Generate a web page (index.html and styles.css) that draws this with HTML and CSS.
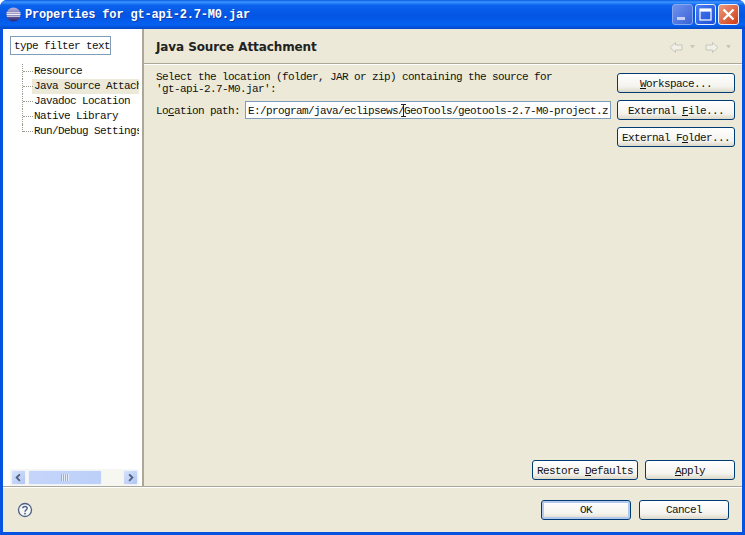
FILE: index.html
```html
<!DOCTYPE html>
<html>
<head>
<meta charset="utf-8">
<title>Properties</title>
<link rel="stylesheet" href="styles.css">
</head>
<body>
<div class="window">
  <header class="titlebar">
    <svg class="appicon" width="15" height="15" viewBox="0 0 15 15"><defs><linearGradient id="sph" x1="0" y1="0" x2="0" y2="1"><stop offset="0" stop-color="#b9b4e0"/><stop offset="1" stop-color="#2c2470"/></linearGradient></defs><circle cx="7.5" cy="7.5" r="7" fill="url(#sph)"/><path d="M0.5 5.8h14M0.5 7.5h14M0.8 9.2h13.4" stroke="#fff" stroke-width="0.9"/></svg>
    <span class="titletext">Properties for gt-api-2.7-M0.jar</span>
    <div class="wincontrols">
      <span class="wbtn wmin"><svg width="21" height="21" viewBox="0 0 21 21"><rect x="5" y="13" width="8" height="3" fill="#c5d0f2"/></svg></span>
      <span class="wbtn wmax"><svg width="21" height="21" viewBox="0 0 21 21"><rect x="5" y="5" width="11" height="11" fill="none" stroke="#fff" stroke-width="1.2"/><rect x="5" y="5" width="11" height="2.6" fill="#fff"/></svg></span>
      <span class="wbtn wclose"><svg width="21" height="21" viewBox="0 0 21 21"><path d="M5.5 5.5l10 10M15.5 5.5l-10 10" stroke="#fff" stroke-width="2.4"/></svg></span>
    </div>
  </header>
  <div class="client">
    <div class="panes">
      <aside class="sidebar">
        <div class="filter">type filter text</div>
        <ul class="tree">
          <li class="node"><span class="label">Resource</span></li>
          <li class="node selected"><span class="label">Java Source Attachment</span></li>
          <li class="node"><span class="label">Javadoc Location</span></li>
          <li class="node"><span class="label">Native Library</span></li>
          <li class="node last"><span class="label">Run/Debug Settings</span></li>
        </ul>
        <div class="hscroll">
          <span class="sbtn"><svg width="14" height="14" viewBox="0 0 14 14"><path d="M8.500 3L5 6.500l3.500 3.500" fill="none" stroke="#4d6185" stroke-width="2"/></svg></span>
          <span class="thumb"><span class="grip"></span></span>
          <span class="strack"></span>
          <span class="sbtn"><svg width="14" height="14" viewBox="0 0 14 14"><path d="M5.500 3L9 6.500l-3.500 3.500" fill="none" stroke="#4d6185" stroke-width="2"/></svg></span>
        </div>
      </aside>
      <main class="page">
        <div class="pagehead">
          <h1 class="pagetitle">Java Source Attachment</h1>
          <div class="nav">
            <svg width="14" height="13" viewBox="0 0 14 13"><path d="M6.500 1.500L1 6.500l5.500 5V9h6.500V4H6.500z" fill="#f2f0e6" stroke="#c6c6bc"/></svg>
            <svg class="drop" width="5" height="4" viewBox="0 0 5 4"><path d="M0 0h5L2.500 3.500z" fill="#c6c6bc"/></svg>
            <svg class="fwd" width="14" height="13" viewBox="0 0 14 13"><path d="M7.500 1.500l5.500 5-5.500 5V9H1V4h6.500z" fill="#f2f0e6" stroke="#c6c6bc"/></svg>
            <svg class="drop" width="5" height="4" viewBox="0 0 5 4"><path d="M0 0h5L2.500 3.500z" fill="#c6c6bc"/></svg>
          </div>
        </div>
        <div class="pagebody">
          <div class="form">
            <div class="fields">
              <p class="desc">Select the location (folder, JAR or zip) containing the source for<br>'gt-api-2.7-M0.jar':</p>
              <div class="pathrow">
                <label class="pathlabel">Lo<u>c</u>ation path:</label>
                <div class="pathinput">E:/program/java/eclipsews/GeoTools/geotools-2.7-M0-project.z<svg class="ibeam" width="5" height="13" viewBox="0 0 5 13"><path d="M0 .5h5M2.500 .5v12M0 12.500h5" stroke="#222" fill="none"/></svg></div>
              </div>
            </div>
            <div class="sidebuttons">
              <button class="btn"><u>W</u>orkspace...</button>
              <button class="btn">External <u>F</u>ile...</button>
              <button class="btn">External F<u>o</u>lder...</button>
            </div>
          </div>
          <div class="pageactions">
            <button class="btn restore">Restore <u>D</u>efaults</button>
            <button class="btn apply"><u>A</u>pply</button>
          </div>
        </div>
      </main>
    </div>
    <footer class="footer">
      <svg class="help" width="16" height="16" viewBox="0 0 16 16"><circle cx="8" cy="8" r="6.500" fill="#f6f6f4" stroke="#4d6185" stroke-width="1.300"/><path d="M5.800 6.300C5.800 3.900 10.200 3.900 10.200 6.300C10.200 8 8 7.800 8 9.800" fill="none" stroke="#4d6185" stroke-width="1.400"/><rect x="7.200" y="10.800" width="1.600" height="1.600" fill="#4d6185"/></svg>
      <div class="footbuttons">
        <button class="btn dialog default">OK</button>
        <button class="btn dialog">Cancel</button>
      </div>
    </footer>
  </div>
</div>
</body>
</html>
```

FILE: styles.css
```css
* { box-sizing: border-box; }
html, body { margin: 0; padding: 0; background: #fff; }
body {
  width: 745px;
  height: 535px;
  overflow: hidden;
  font-family: "Liberation Mono", "DejaVu Sans Mono", monospace;
  font-size: 11px;
  letter-spacing: -0.6px;
  color: #111;
}
.window {
  width: 745px;
  height: 535px;
  display: flex;
  flex-direction: column;
  border-radius: 7px 7px 0 0;
  background: #0553e0;
  padding: 0 3px 3px 3px;
  overflow: hidden;
}
.titlebar {
  flex: none;
  height: 29px;
  margin: 0 -3px;
  padding: 0 6px;
  display: flex;
  align-items: center;
  background: linear-gradient(#0a5ae4 0, #3d95ff 7%, #0a62ec 18%, #0355e4 55%, #0561f0 85%, #0348c8 100%);
}
.appicon { flex: none; margin-right: 4px; }
.titletext {
  flex: 1;
  color: #fff;
  font-weight: 700;
  font-size: 12px;
  letter-spacing: -0.17px;
  text-shadow: 1px 1px 0 #0f3cae;
}
.wincontrols { display: flex; gap: 2px; }
.wbtn {
  width: 21px;
  height: 21px;
  border: 1px solid #e8eefc;
  border-radius: 3px;
  display: flex;
  align-items: center;
  justify-content: center;
  overflow: hidden;
}
.wbtn svg { flex: none; }
.wmin { background: linear-gradient(135deg, #6f93ec, #3a62d8); border-color: #86a6f0; }
.wmax { background: linear-gradient(135deg, #4a7cf0, #1d50d8); }
.wclose { background: linear-gradient(135deg, #ec9a80, #d03a12); }
.client {
  flex: 1;
  min-height: 0;
  display: flex;
  flex-direction: column;
  background: #ece9d8;
}
.panes { flex: 1; min-height: 0; display: flex; }
.sidebar {
  flex: none;
  width: 141px;
  background: #fff;
  border-right: 2px solid #aca899;
  display: flex;
  flex-direction: column;
  padding: 7px 3px 0 7px;
  overflow: hidden;
}
.filter {
  width: 101px;
  height: 19px;
  border: 1px solid #7f9db9;
  padding-left: 3px;
  line-height: 18px;
  white-space: nowrap;
  overflow: hidden;
}
.tree {
  list-style: none;
  margin: 9px 0 0 0;
  padding: 0 0 0 12px;
  flex: 1;
  min-width: 0;
}
.node {
  height: 15px;
  line-height: 15px;
  padding-left: 12px;
  white-space: nowrap;
  overflow: hidden;
  position: relative;
}
.node::before {
  content: "";
  position: absolute;
  left: 0;
  top: 0;
  height: 15px;
  width: 1px;
  border-left: 1px dotted #9a9a90;
}
.node.last::before { height: 8px; }
.node::after {
  content: "";
  position: absolute;
  left: 1px;
  top: 7px;
  width: 10px;
  border-top: 1px dotted #9a9a90;
}
.node.selected .label {
  display: block;
  background: #ece9d8;
  margin-left: -2px;
  padding-left: 2px;
}
.hscroll {
  flex: none;
  height: 17px;
  width: 129px;
  display: flex;
  background: #f7f7f2;
  padding: 0 1px;
}
.sbtn {
  flex: none;
  width: 15px;
  height: 15px;
  margin-top: 1px;
  border-radius: 2px;
  background: linear-gradient(135deg, #d6e2fa, #b2c6f4);
  border: 1px solid #eef2fc;
  display: flex;
  align-items: center;
  justify-content: center;
}
.thumb {
  flex: none;
  width: 74px;
  height: 15px;
  margin: 1px 0 0 2px;
  border-radius: 2px;
  background: linear-gradient(90deg, #c5d5fa, #bcd0f8);
  border: 1px solid #eef2fc;
  display: flex;
  align-items: center;
  justify-content: center;
}
.grip {
  width: 8px;
  height: 7px;
  background: repeating-linear-gradient(90deg, #8fb0ee 0 1px, #e4ecfc 1px 2px);
}
.strack { flex: 1; }
.page {
  flex: 1;
  min-width: 0;
  display: flex;
  flex-direction: column;
}
.pagehead {
  flex: none;
  height: 35px;
  padding: 2px 11px 0 12px;
  display: flex;
  align-items: center;
  justify-content: space-between;
  border-bottom: 1px solid #aca899;
}
.pagetitle {
  margin: 0;
  font-family: "DejaVu Sans", sans-serif;
  font-weight: 700;
  font-size: 12px;
  letter-spacing: -0.1px;
  color: #222;
}
.nav { display: flex; align-items: center; }
.drop { margin-left: 7px; }
.fwd { margin-left: 10px; }
.pagebody {
  flex: 1;
  min-height: 0;
  border-top: 1px solid #fff;
  display: flex;
  flex-direction: column;
  padding: 6px 7px 6px 12px;
}
.form { flex: 1; display: flex; gap: 6px; }
.fields { flex: 1; min-width: 0; }
.desc { margin: 0; line-height: 12px; }
.pathrow { display: flex; align-items: center; margin-top: 6px; }
.pathlabel { flex: none; width: 89px; padding-top: 1px; }
.pathinput {
  flex: 1;
  min-width: 0;
  height: 18px;
  border: 1px solid #7f9db9;
  background: #fff;
  padding: 1px 0 0 2px;
  line-height: 16px;
  white-space: nowrap;
  overflow: hidden;
  position: relative;
}
.ibeam { position: absolute; left: 155px; top: 2px; }
.sidebuttons { flex: none; width: 118px; display: flex; flex-direction: column; gap: 7px; margin-top: 2px; }
.btn {
  font: inherit;
  letter-spacing: inherit;
  color: #111;
  height: 20px;
  padding: 1px 0 0 0;
  border: 1px solid #003c74;
  border-radius: 3px;
  background: linear-gradient(#fff, #f4f3ee 70%, #dcd8c8);
}
.pageactions { flex: none; display: flex; justify-content: flex-end; gap: 7px; }
.restore { width: 106px; }
.apply { width: 90px; }
.footer {
  flex: none;
  height: 46px;
  border-top: 1px solid #aca899;
  box-shadow: inset 0 1px 0 #fff;
  display: flex;
  align-items: center;
  justify-content: space-between;
  padding: 0 13px 0 14px;
}
.help { flex: none; }
.footbuttons { display: flex; gap: 8px; }
.dialog { width: 90px; }
.default { box-shadow: inset 0 0 0 2px #b4c8ee; }
```
